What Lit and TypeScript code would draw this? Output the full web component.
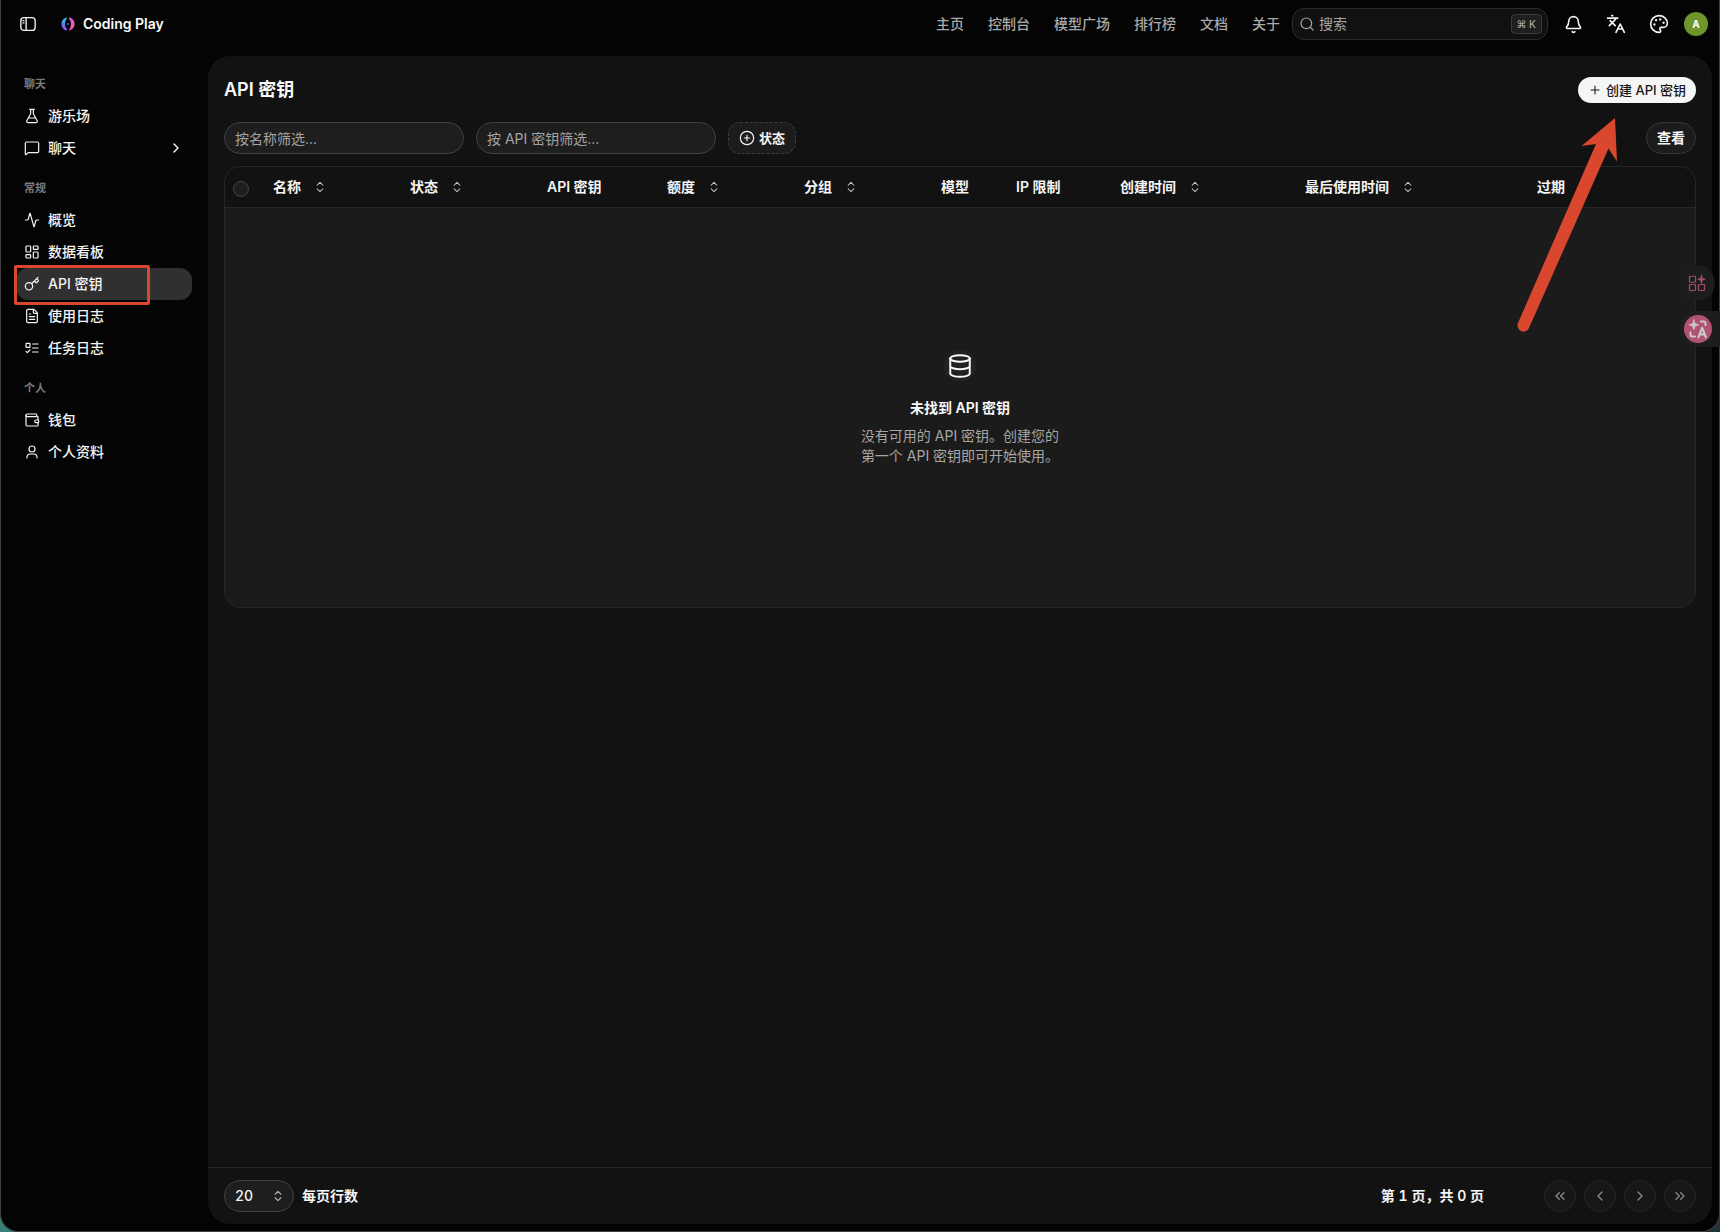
import { LitElement, html, css, svg, type TemplateResult, type SVGTemplateResult } from "lit";
import { customElement } from "lit/decorators.js";
import { classMap } from "lit/directives/class-map.js";

const icons: Record<string, SVGTemplateResult> = {
  panel: svg`<rect x="2.5" y="3.5" width="19" height="17" rx="4"/><path d="M9.5 3.5v17M5.5 7.5h1M5.5 10.5h1"/>`,
  flask: svg`<path d="M14 2v6a2 2 0 0 0 .245.96l5.51 10.08A2 2 0 0 1 18 22H6a2 2 0 0 1-1.755-2.96l5.51-10.08A2 2 0 0 0 10 8V2M6.453 15h11.094M8.5 2h7"/>`,
  message: svg`<path d="M22 17a2 2 0 0 1-2 2H6.828a2 2 0 0 0-1.414.586l-2.202 2.202A.71.71 0 0 1 2 21.286V5a2 2 0 0 1 2-2h16a2 2 0 0 1 2 2z"/>`,
  activity: svg`<path d="M22 12h-2.48a2 2 0 0 0-1.93 1.46l-2.35 8.36a.25.25 0 0 1-.48 0L9.24 2.18a.25.25 0 0 0-.48 0l-2.35 8.36A2 2 0 0 1 4.49 12H2"/>`,
  dashboard: svg`<rect width="7" height="9" x="3" y="3" rx="1"/><rect width="7" height="5" x="14" y="3" rx="1"/><rect width="7" height="9" x="14" y="12" rx="1"/><rect width="7" height="5" x="3" y="16" rx="1"/>`,
  key: svg`<path d="m15.5 7.5 2.3 2.3a1 1 0 0 0 1.4 0l2.1-2.1a1 1 0 0 0 0-1.4L19 4M21 2l-9.6 9.6"/><circle cx="7.5" cy="15.5" r="5.5"/>`,
  file: svg`<path d="M15 2H6a2 2 0 0 0-2 2v16a2 2 0 0 0 2 2h12a2 2 0 0 0 2-2V7ZM14 2v4a2 2 0 0 0 2 2h4M10 9H8M16 13H8M16 17H8"/>`,
  tasks: svg`<rect x="3" y="5" width="6" height="6" rx="1"/><path d="m3 17 2 2 4-4M13 6h8M13 12h8M13 18h8"/>`,
  wallet: svg`<path d="M19 7V4a1 1 0 0 0-1-1H5a2 2 0 0 0 0 4h15a1 1 0 0 1 1 1v4h-3a2 2 0 0 0 0 4h3a1 1 0 0 0 1-1v-2a1 1 0 0 0-1-1"/><path d="M3 5v14a2 2 0 0 0 2 2h15a1 1 0 0 0 1-1v-4"/>`,
  user: svg`<circle cx="12" cy="7.5" r="4.5"/><path d="M19.5 21v-1a5 5 0 0 0-5-5h-5a5 5 0 0 0-5 5v1"/>`,
  right: svg`<path d="m9 18 6-6-6-6"/>`,
  left: svg`<path d="m15 18-6-6 6-6"/>`,
  first: svg`<path d="m11 17-5-5 5-5M18 17l-5-5 5-5"/>`,
  last: svg`<path d="m6 17 5-5-5-5M13 17l5-5-5-5"/>`,
  search: svg`<path d="m21 21-4.34-4.34"/><circle cx="11" cy="11" r="8"/>`,
  bell: svg`<path d="M10.268 21a2 2 0 0 0 3.464 0M3.262 15.326A1 1 0 0 0 4 17h16a1 1 0 0 0 .74-1.673C19.41 13.956 18 12.499 18 8A6 6 0 0 0 6 8c0 4.499-1.411 5.956-2.738 7.326"/>`,
  translate: svg`<path d="m5 8 6 6M4 14l6-6 2-3M2 5h12M7 2h1M22 22l-5-10-5 10M14 18h6"/>`,
  palette: svg`<path d="M12 22a1 1 0 0 1 0-20 10 9 0 0 1 10 9 5 5 0 0 1-5 5h-2.25a1.75 1.75 0 0 0-1.4 2.8l.3.4a1.75 1.75 0 0 1-1.4 2.8z"/><g fill="currentColor" stroke-width="1.4"><circle cx="13.5" cy="6.5" r=".7"/><circle cx="17.5" cy="10.5" r=".7"/><circle cx="6.5" cy="12.5" r=".7"/><circle cx="8.5" cy="7.5" r=".7"/></g>`,
  plus: svg`<path d="M5 12h14M12 5v14"/>`,
  circlePlus: svg`<circle cx="12" cy="12" r="10"/><path d="M8 12h8M12 8v8"/>`,
  sort: svg`<path d="m7 15 5 5 5-5M7 9l5-5 5 5"/>`,
  database: svg`<ellipse cx="12" cy="5" rx="9" ry="3"/><path d="M3 5v14a9 3 0 0 0 18 0V5M3 12a9 3 0 0 0 18 0"/>`,
  apps: svg`<rect x="2" y="3" width="8" height="8" rx="1"/><rect x="2" y="14" width="8" height="8" rx="1"/><rect x="14" y="14" width="8" height="8" rx="1"/><path fill="currentColor" stroke-width="1" d="M18 1.5 19.2 5.8 23 7l-3.8 1.2L18 12.5l-1.2-4.3L13 7l3.8-1.2z"/>`,
  aiTranslate: svg`<path fill="currentColor" stroke-width=".8" d="M7 1 8.5 5.5 13 7 8.5 8.5 7 13 5.5 8.5 1 7 5.5 5.5z"/><path stroke-width="2.4" d="M15.5 3H19a2 2 0 0 1 2 2v2.5M3 16v3a2 2 0 0 0 2 2h3.5"/><path stroke-width="2.6" d="m12.5 22 4.5-11.5L21.5 22M14 18.5h6"/>`,
};

const icon = (name: string, size = 16, stroke = 2): TemplateResult => html`<svg
  width=${size} height=${size} viewBox="0 0 24 24" fill="none" stroke="currentColor"
  stroke-width=${stroke} stroke-linecap="round" stroke-linejoin="round" aria-hidden="true">${icons[name]}</svg>`;

interface NavItem { label: string; icon: string; active?: boolean; more?: boolean }

const groups: { title: string; items: NavItem[] }[] = [
  { title: "聊天", items: [
    { label: "游乐场", icon: "flask" },
    { label: "聊天", icon: "message", more: true },
  ] },
  { title: "常规", items: [
    { label: "概览", icon: "activity" },
    { label: "数据看板", icon: "dashboard" },
    { label: "API 密钥", icon: "key", active: true },
    { label: "使用日志", icon: "file" },
    { label: "任务日志", icon: "tasks" },
  ] },
  { title: "个人", items: [
    { label: "钱包", icon: "wallet" },
    { label: "个人资料", icon: "user" },
  ] },
];

const links = ["主页", "控制台", "模型广场", "排行榜", "文档", "关于"];

const columns: { label: string; sortable?: boolean; size: string }[] = [
  { label: "名称", sortable: true, size: "c-md" },
  { label: "状态", sortable: true, size: "c-md" },
  { label: "API 密钥", size: "c-key" },
  { label: "额度", sortable: true, size: "c-md" },
  { label: "分组", sortable: true, size: "c-md" },
  { label: "模型", size: "c-model" },
  { label: "IP 限制", size: "c-ip" },
  { label: "创建时间", sortable: true, size: "c-created" },
  { label: "最后使用时间", sortable: true, size: "c-used" },
  { label: "过期", size: "c-rest" },
];

const base = css`
  * { box-sizing: border-box; }
  svg { display: block; flex: none; }
  a { color: inherit; text-decoration: none; }
  button, input, select { font: inherit; color: inherit; margin: 0; }
  button { cursor: pointer; background: none; border: 0; padding: 0; }
`;

@customElement("app-header")
export class AppHeader extends LitElement {
  static styles = [base, css`
    :host { display: flex; align-items: center; height: 48px; padding: 0 4px 0 15px; }
    .icon-btn { display: grid; place-items: center; width: 24px; height: 32px; color: #f4f4f4; }
    .brand { display: flex; align-items: center; gap: 8px; margin-left: 21px; font-weight: 600; color: #fafafa; }
    .links { display: flex; gap: 24px; margin-left: auto; color: #a8a8a8; font-weight: 500; }
    .search { display: flex; align-items: center; gap: 4px; width: 256px; height: 32px; margin-left: 12px; padding: 0 5px 0 6px;
      border: 1px solid #2c2c2c; border-radius: 12px; background: #111; color: #a6a6a6; }
    .search input { flex: 1; min-width: 0; padding: 0; border: 0; outline: 0; background: none; }
    .search input::placeholder { color: #a6a6a6; opacity: 1; }
    kbd { padding: 0 5px; border: 1px solid #3a3a3a; border-radius: 4px; background: #1f1f1f;
      font: 500 10px/18px Inter, "DejaVu Sans", sans-serif; }
    .actions { display: flex; align-items: center; gap: 19px; margin-left: 13px; }
    .avatar { width: 24px; height: 24px; margin-left: -6px; border-radius: 50%; background: #6f962b; color: #fff; font-size: 10px; font-weight: 700; }
  `];

  render() {
    return html`
      <button class="icon-btn" aria-label="侧边栏">${icon("panel", 18, 1.8)}</button>
      <a class="brand" href="#">
        <svg width="14" height="14" viewBox="0 0 14 14" aria-hidden="true">
          <defs>
            <linearGradient id="l" x1="0" y1="0" x2="0" y2="1"><stop offset="0" stop-color="#27d3e8"/><stop offset=".55" stop-color="#5b7cf5"/><stop offset="1" stop-color="#a34df0"/></linearGradient>
            <linearGradient id="r" x1="0" y1="0" x2="0" y2="1"><stop offset="0" stop-color="#d94fe0"/><stop offset=".5" stop-color="#ff5fae"/><stop offset="1" stop-color="#e64fd0"/></linearGradient>
          </defs>
          <path fill="url(#l)" d="M6.5 .5C3 .8 .5 3.6 .5 7s2.200 6 5 6.500l.8-1.500C4.800 11 4 9.200 4 7s.8-4.500 2.500-6.500z"/>
          <path fill="url(#r)" d="M8.500 .5c2.800 .5 5 3.100 5 6.500s-2.500 6.200-6 6.500C9.200 11.500 10 9.200 10 7s-.8-4-2.300-5z"/>
          <circle cx="7" cy="7" r="1" fill="#2f6fd8"/>
        </svg>
        <span>Coding Play</span>
      </a>
      <nav class="links">${links.map((l) => html`<a href="#">${l}</a>`)}</nav>
      <label class="search">
        ${icon("search", 16, 1.8)}
        <input type="text" placeholder="搜索" aria-label="搜索" />
        <kbd>⌘ K</kbd>
      </label>
      <div class="actions">
        <button class="icon-btn" aria-label="通知">${icon("bell", 19, 2)}</button>
        <button class="icon-btn" aria-label="语言">${icon("translate", 20, 2)}</button>
        <button class="icon-btn" aria-label="主题">${icon("palette", 20, 2)}</button>
        <button class="avatar">A</button>
      </div>
    `;
  }
}

@customElement("app-sidebar")
export class AppSidebar extends LitElement {
  static styles = [base, css`
    :host { display: flex; flex-direction: column; gap: 8px; padding: 12px 16px 12px 15px; }
    h2 { margin: 0; padding: 0 8px; font-size: 11px; line-height: 32px; font-weight: 600; color: #7a7a7a; }
    ul { margin: 0; padding: 0; list-style: none; }
    li { position: relative; }
    .item { display: flex; align-items: center; gap: 8px; height: 32px; padding: 0 8px; border-radius: 12px; color: #f5f5f5; font-weight: 500; }
    .item span { flex: 1; }
    .active { background: #303030; }
    .mark { position: absolute; left: -2px; top: -3px; width: 136px; height: 40px; border: 3px solid #d9482e; border-radius: 2px; pointer-events: none; }
  `];

  render() {
    return groups.map((g) => html`
      <section>
        <h2>${g.title}</h2>
        <ul>
          ${g.items.map((i) => html`<li>
            <a href="#" class=${classMap({ item: true, active: !!i.active })}>
              ${icon(i.icon, 16, 1.8)}<span>${i.label}</span>${i.more ? icon("right", 16, 2.2) : null}
            </a>
            ${i.active ? html`<div class="mark"></div>` : null}
          </li>`)}
        </ul>
      </section>`);
  }
}

@customElement("key-table")
export class KeyTable extends LitElement {
  static styles = [base, css`
    :host { display: block; border: 1px solid #272727; border-radius: 16px; overflow: hidden; }
    table { width: 100%; border-collapse: separate; border-spacing: 0; table-layout: fixed; }
    th { height: 41px; padding: 0 8px; border-bottom: 1px solid #272727; text-align: left; font-weight: 600; color: #f5f5f5; white-space: nowrap; }
    th button { display: flex; align-items: center; gap: 12px; }
    th svg { color: #c4c4c4; }
    .c-check { width: 40px; }
    .c-md { width: 137px; }
    .c-key { width: 120px; }
    .c-model { width: 75px; }
    .c-ip { width: 104px; }
    .c-created { width: 185px; }
    .c-used { width: 232px; }
    .check { appearance: none; display: block; width: 16px; height: 16px; margin: 4px 0 0; border: 1px solid #444; border-radius: 50%; background: #1f1f1f; }
    td { height: 399px; padding: 0; background: #1b1b1b; }
    .empty { display: flex; flex-direction: column; align-items: center; text-align: center; }
    .badge { display: grid; place-items: center; width: 32px; height: 32px; border-radius: 50%; background: #222; color: #fafafa; }
    h3 { margin: 16px 0 8px; font-size: 14px; line-height: 20px; font-weight: 600; color: #fafafa; }
    p { width: 208px; margin: 0; line-height: 20px; color: #a6a6a6; }
  `];

  render() {
    return html`<table>
      <colgroup><col class="c-check" />${columns.map((c) => html`<col class=${c.size} />`)}</colgroup>
      <thead><tr>
        <th scope="col"><input class="check" type="checkbox" aria-label="全选" /></th>
        ${columns.map((c) => html`<th scope="col">${c.sortable
          ? html`<button><span>${c.label}</span>${icon("sort", 14, 1.8)}</button>` : c.label}</th>`)}
      </tr></thead>
      <tbody><tr><td colspan="11"><div class="empty">
        <div class="badge">${icon("database", 26, 1.8)}</div>
        <h3>未找到 API 密钥</h3>
        <p>没有可用的 API 密钥。创建您的第一个 API 密钥即可开始使用。</p>
      </div></td></tr></tbody>
    </table>`;
  }
}

@customElement("app-root")
export class AppRoot extends LitElement {
  static styles = [base, css`
    :host { display: grid; position: relative; min-height: 100vh; overflow: hidden; background: linear-gradient(90deg, #3b8077, #1c3338);
      font: 400 14px/20px Inter, "Noto Sans CJK SC", sans-serif; color: #f5f5f5; }
    .window { display: flex; flex-direction: column; padding: 0 7px 7px 0; background: #040404;
      border: 1px solid #414141; border-top: 0; border-radius: 0 0 18px 18px; }
    .body { flex: 1; display: flex; padding-top: 8px; }
    app-sidebar { width: 207px; flex: none; }
    main { flex: 1; min-width: 0; display: flex; flex-direction: column; border-radius: 22px; background: #121212; }
    .content { flex: 1; padding: 16px; }
    .title-row, .filters, footer { display: flex; align-items: center; }
    .title-row { height: 36px; justify-content: space-between; }
    h1 { margin: 0; font-size: 18px; line-height: 28px; font-weight: 600; color: #fafafa; }
    .create { display: flex; align-items: center; gap: 4px; height: 26px; padding: 0 10px; border-radius: 13px; background: #f4f5f5;
      color: #161616; font-size: 13px; font-weight: 500; }
    .filters { gap: 12px; margin: 14px 0 12px; }
    .field { width: 240px; height: 32px; padding: 0 10px; border: 1px solid #404040; border-radius: 16px; background: #1e1e1e; outline: 0; }
    .field::placeholder { color: #a3a3a3; opacity: 1; }
    .status { display: flex; align-items: center; gap: 4px; height: 32px; padding: 0 10px; border: 1px dashed #3d3d3d; border-radius: 12px; background: #1c1c1c;
      font-size: 13px; font-weight: 600; }
    .view { height: 32px; margin-left: auto; padding: 0 10px; border: 1px solid #363636; border-radius: 16px; background: #1c1c1c; font-weight: 600; }
    footer { height: 57px; padding: 0 16px; border-top: 1px solid #272727; font-weight: 600; font-variant-numeric: tabular-nums; }
    .size { position: relative; display: flex; align-items: center; margin-right: 8px; }
    .size select { appearance: none; width: 70px; height: 32px; padding: 0 10px; border: 1px solid #404040; border-radius: 16px; background: #1e1e1e; font-weight: 500; outline: 0; }
    .size svg { position: absolute; right: 9px; color: #b0b0b0; pointer-events: none; }
    .page { margin-left: auto; }
    .pager { display: flex; gap: 8px; margin-left: 60px; }
    .pager button { display: grid; place-items: center; width: 32px; height: 32px; border: 1px solid #292929; border-radius: 50%; background: #171717; color: #8a8a8a; }
    .arrow { position: absolute; right: 101px; top: 116px; pointer-events: none; }
    .float { position: absolute; display: grid; place-items: center; width: 36px; height: 36px; background: #1d1d1d; }
    .apps { right: 5px; top: 265px; border-radius: 50%; color: #a34f68; }
    .trans { right: 0; top: 311px; width: 41px; padding-right: 3px; border-radius: 18px 0 0 18px; }
    .dot { display: grid; place-items: center; width: 28px; height: 28px; border-radius: 50%; background: #b05370; color: #c9c9c9; }
  `];

  render() {
    return html`
      <div class="window">
        <app-header></app-header>
        <div class="body">
          <app-sidebar></app-sidebar>
          <main>
            <div class="content">
              <div class="title-row">
                <h1>API 密钥</h1>
                <button class="create">${icon("plus", 14, 1.8)}<span>创建 API 密钥</span></button>
              </div>
              <div class="filters">
                <input class="field" type="text" placeholder="按名称筛选..." aria-label="按名称筛选" />
                <input class="field" type="text" placeholder="按 API 密钥筛选..." aria-label="按 API 密钥筛选" />
                <button class="status">${icon("circlePlus", 16, 1.8)}<span>状态</span></button>
                <button class="view">查看</button>
              </div>
              <key-table></key-table>
            </div>
            <footer>
              <div class="size">
                <select id="rows"><option>20</option></select>
                ${icon("sort", 14, 2)}
              </div>
              <label for="rows">每页行数</label>
              <span class="page">第 1 页，共 0 页</span>
              <div class="pager">
                <button aria-label="首页">${icon("first")}</button>
                <button aria-label="上一页">${icon("left")}</button>
                <button aria-label="下一页">${icon("right")}</button>
                <button aria-label="末页">${icon("last")}</button>
              </div>
            </footer>
          </main>
        </div>
      </div>
      <svg class="arrow" width="103" height="216" viewBox="1516 116 103 216" aria-hidden="true">
        <path fill="#d9482e" d="M1615 118 1581.5 146 1596 144 1518 323a6 6 0 0 0 11 5L1608.5 148.5 1617 161.5z"/>
      </svg>
      <button class="float apps" aria-label="应用">${icon("apps", 18, 1.6)}</button>
      <button class="float trans" aria-label="翻译"><span class="dot">${icon("aiTranslate", 20, 2)}</span></button>
    `;
  }
}
